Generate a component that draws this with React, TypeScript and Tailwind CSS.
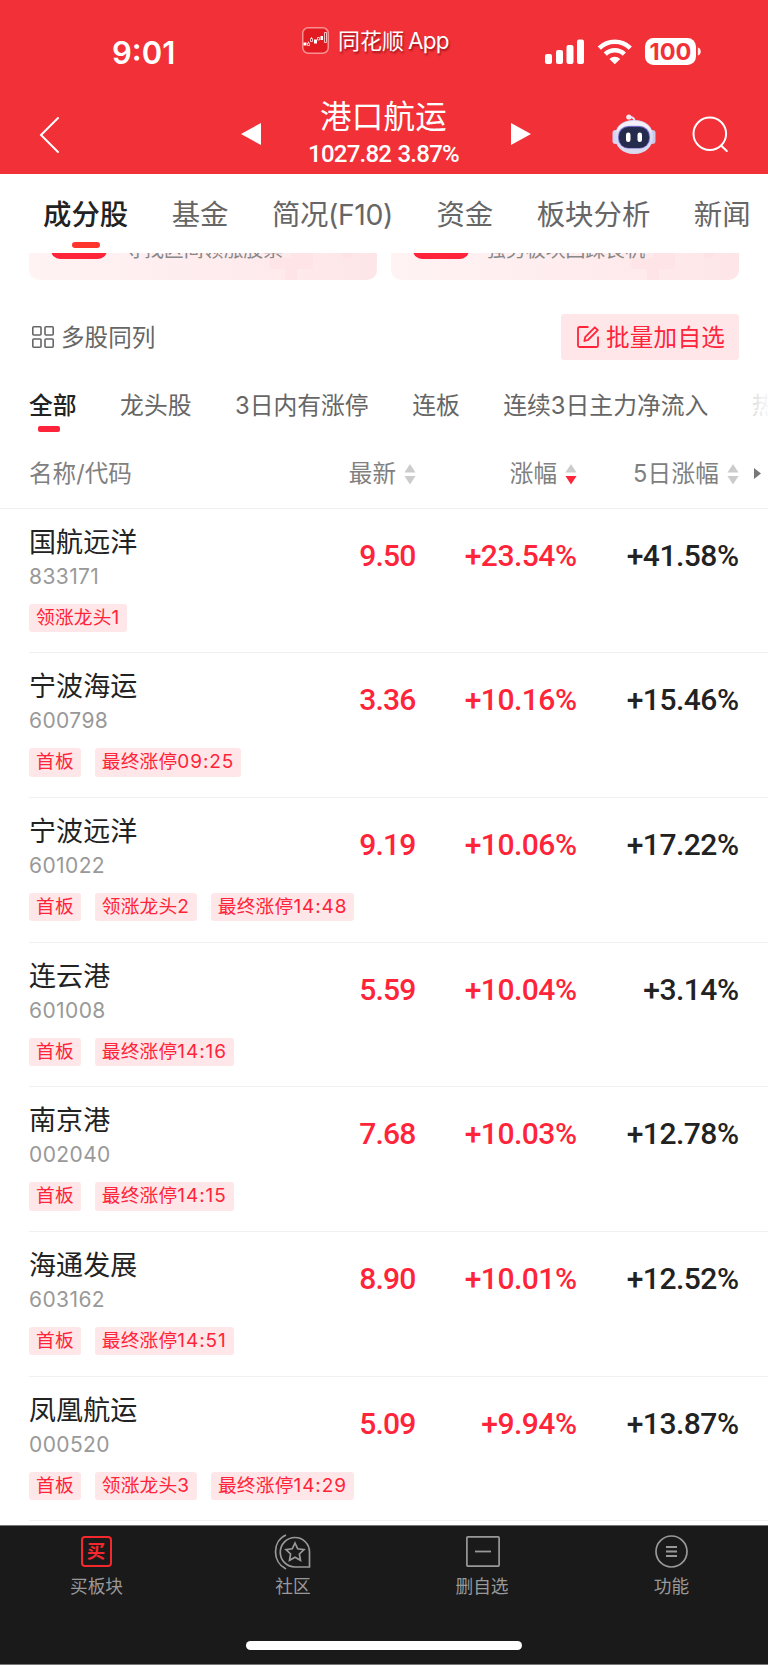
import React from 'react';
import clsx from 'clsx';

interface Stock {
  name: string;
  code: string;
  price: string;
  change: string;
  fiveDay: string;
  tags: string[];
}

const stocks: Stock[] = [
  { name: '国航远洋', code: '833171', price: '9.50', change: '+23.54%', fiveDay: '+41.58%', tags: ['领涨龙头1'] },
  { name: '宁波海运', code: '600798', price: '3.36', change: '+10.16%', fiveDay: '+15.46%', tags: ['首板', '最终涨停09:25'] },
  { name: '宁波远洋', code: '601022', price: '9.19', change: '+10.06%', fiveDay: '+17.22%', tags: ['首板', '领涨龙头2', '最终涨停14:48'] },
  { name: '连云港', code: '601008', price: '5.59', change: '+10.04%', fiveDay: '+3.14%', tags: ['首板', '最终涨停14:16'] },
  { name: '南京港', code: '002040', price: '7.68', change: '+10.03%', fiveDay: '+12.78%', tags: ['首板', '最终涨停14:15'] },
  { name: '海通发展', code: '603162', price: '8.90', change: '+10.01%', fiveDay: '+12.52%', tags: ['首板', '最终涨停14:51'] },
  { name: '凤凰航运', code: '000520', price: '5.09', change: '+9.94%', fiveDay: '+13.87%', tags: ['首板', '领涨龙头3', '最终涨停14:29'] },
];

const tabs = ['成分股', '基金', '简况(F10)', '资金', '板块分析', '新闻'];
const filters = ['全部', '龙头股', '3日内有涨停', '连板', '连续3日主力净流入', '热'];
const promos = ['寻找区间领涨股票', '强势板块回踩良机'];

function StatusBar() {
  return (
    <div className="flex h-[82px] items-start">
      <div className="w-[190px] pl-[112px] pt-[34px] text-[31px] font-semibold leading-[37px]">9:01</div>
      <div className="ml-[112px] mt-[26px] flex items-center">
        <svg width="27" height="27" viewBox="0 0 27 27" fill="none">
          <rect x="0.75" y="0.75" width="25.5" height="25.5" rx="5.5" fill="#e21b22" stroke="#f88f92" strokeWidth="1.5" />
          <path d="M1.5 15.500h3v3h-3zM12 12.500h3v4h-3zM18.500 9h2.500v4h-2.500z" fill="#fff" />
          <path d="M5.500 16h2v2.500h-2zM6.500 14.500V16M8.500 11.500h2V14.500h-2zM9.500 10v1.500M15.500 10.500h2v2.500h-2zM22.500 5.500h2v10h-2z" stroke="#fff" strokeWidth="0.7" />
        </svg>
        <span className="ml-[9px] whitespace-nowrap pt-px text-[22px] leading-[27px] [text-shadow:1px_2px_2px_rgba(90,0,0,0.55)]">
          同花顺<span className="ml-[4px] text-[22.500px] tracking-[-0.8px]">App</span>
        </span>
      </div>
      <svg className="absolute left-[545px] top-[38px]" width="157" height="28" viewBox="0 0 157 28" fill="#fff">
        <rect x="0" y="16" width="7" height="10" rx="2" />
        <rect x="11" y="12" width="7" height="14" rx="2" />
        <rect x="21.500" y="7" width="7" height="19" rx="2" />
        <rect x="32" y="1.500" width="7" height="24.500" rx="2" />
        <g fill="none" stroke="#fff" strokeWidth="4.600">
          <path d="M54.300 10.200a22 22 0 0 1 31 0" />
          <path d="M60.300 16.100a13.500 13.500 0 0 1 19 0" />
        </g>
        <path d="M69.800 26.200l-5.400-5.300a7.700 7.700 0 0 1 10.800 0z" />
        <rect x="100" y="0" width="51" height="27" rx="8.500" />
        <path d="M152.800 9.500c4 .8 4 7.200 0 8z" opacity="0.9" />
        <text x="125.500" y="22" textAnchor="middle" fontFamily="Inter, sans-serif" fontWeight="700" fontSize="23.500" fill="#f23038">100</text>
      </svg>
    </div>
  );
}

function Robot() {
  return (
    <svg width="44" height="41" viewBox="0 0 44 41" fill="none">
      <path d="M22.500 7c0-3-2-4-5.500-4" stroke="#e4e3f5" strokeWidth="2" />
      <circle cx="16.800" cy="3" r="2.600" fill="#f3e9f2" />
      <rect x="0.500" y="16" width="6" height="14" rx="3" fill="#d5d4f0" />
      <rect x="37.500" y="16" width="6" height="14" rx="3" fill="#c9c8ea" />
      <path d="M22 6C9.500 6 3 13 3 22.500S9.500 40 22 40s19-8 19-17.500S34.500 6 22 6z" fill="#d9d9f0" />
      <path d="M22 7C11 7 5.500 12.500 4.500 19c4-6 10-8 17.500-8s13.500 2 17.500 8C38.500 12.500 33 7 22 7z" fill="#f4f1fa" />
      <rect x="6" y="12" width="32" height="22.500" rx="10.500" fill="#7367c9" />
      <rect x="7" y="13" width="30" height="21" rx="9.500" fill="#252b4c" />
      <rect x="14" y="18.500" width="4.500" height="9.500" rx="2.200" fill="#fff" />
      <rect x="25.500" y="18.500" width="4.500" height="9.500" rx="2.200" fill="#fff" />
    </svg>
  );
}

function TitleBar() {
  return (
    <div className="flex h-[92px] items-start">
      <svg className="ml-[39px] mt-[34px]" width="21" height="38" viewBox="0 0 21 38" fill="none" stroke="#fff" strokeWidth="2" strokeLinecap="round">
        <path d="M19 2L2 19l17 17" />
      </svg>
      <svg className="ml-[181px] mt-[41px]" width="20" height="22" viewBox="0 0 20 22" fill="#fff">
        <path d="M20 0v22L0 11z" />
      </svg>
      <div className="flex w-[250px] flex-col items-center whitespace-nowrap pr-[5px] pt-[15px]">
        <h1 className="text-[31.500px] leading-[40px] tracking-[0.2px]">港口航运</h1>
        <div className="pt-[2px] font-[Roboto] text-[24px] font-medium leading-[30px] tracking-[-0.75px] [word-spacing:1px]">1027.82 3.87%</div>
      </div>
      <svg className="mt-[41px]" width="20" height="22" viewBox="0 0 20 22" fill="#fff">
        <path d="M0 0l20 11L0 22z" />
      </svg>
      <div className="ml-[81px] mt-[32px]">
        <Robot />
      </div>
      <svg className="ml-[36px] mt-[34px]" width="37" height="38" viewBox="0 0 37 38" fill="none" stroke="#fff" strokeWidth="2" strokeLinecap="round">
        <circle cx="17.800" cy="17.800" r="16.300" />
        <path d="M29.300 29.800l5.500 5.200" />
      </svg>
    </div>
  );
}

function PromoCard({ text }: { text: string }) {
  return (
    <div className="relative h-[80px] w-[348px] shrink-0 overflow-hidden rounded-[10px] bg-linear-to-r from-[#fff3f4] to-[#fee6e8]">
      <svg className="absolute bottom-0 right-0" width="120" height="27" viewBox="0 0 120 27" fill="#fddfe2" opacity="0.5">
        <path d="M34 0h22v16H40v11H28V16H12V5h22zM84 0h12c0 7-12 8-12 0z" />
      </svg>
      <div className="flex h-[58.500px] items-end">
        <div className="ml-[22px] h-[40px] w-[56px] rounded-[9px] bg-[#ff2439]" />
        <div className="-mb-[5px] ml-[17px] whitespace-nowrap text-[19.900px] leading-[28px] text-[#888]">{text}</div>
      </div>
    </div>
  );
}

function SortArrows({ active }: { active?: boolean }) {
  return (
    <svg className="ml-[8px] mr-px" width="12" height="21" viewBox="0 0 13 21" preserveAspectRatio="none">
      <path d="M6.500 0l6 8.500h-12z" fill="#ccc" />
      <path d="M6.500 20.500l6-8.500h-12z" fill={active ? '#ff2439' : '#ccc'} />
    </svg>
  );
}

function Tag({ text }: { text: string }) {
  // digits are spaced a little wider than the characters before them
  const [, label, digits] = text.match(/^(\D+)(.*)$/) ?? ['', text, ''];

  return (
    <span className="h-[28.500px] whitespace-nowrap rounded-[3px] bg-[#ffe7e9] px-[7px] text-[18.700px] leading-[28px] tracking-[0.2px] text-[#ff2439]">
      {label}
      {digits && <span className="text-[19px] tracking-[0.9px]">{digits}</span>}
    </span>
  );
}

function StockRow({ stock }: { stock: Stock }) {
  return (
    <div className="ml-[29px] h-[144.700px] border-b-[1.500px] border-[#f0f0f0] pr-[29.500px] pt-[15px]">
      <div className="grid h-[80px] grid-cols-[1fr_161px_162px] font-[Roboto] text-[30px] font-medium leading-[38px] tracking-[-0.5px] text-[#ff2439]">
        <div className="flex justify-between">
          <div className="font-['Inter','Noto_Sans_CJK_SC',sans-serif] font-normal">
            <div className="text-[27px] leading-[38px] tracking-[0.1px] text-[#222]">{stock.name}</div>
            <div className="text-[21px] leading-[29px] tracking-[0.4px] text-[#999]">{stock.code}</div>
          </div>
          <div className="pt-[13px] tracking-[-0.8px]">{stock.price}</div>
        </div>
        <div className="pt-[13px] text-right">{stock.change}</div>
        <div className="pt-[13px] text-right text-[#222]">{stock.fiveDay}</div>
      </div>
      <div className="flex gap-[14px]">
        {stock.tags.map((tag) => (
          <Tag key={tag} text={tag} />
        ))}
      </div>
    </div>
  );
}

function BottomItem({ label, children }: { label: string; children: React.ReactNode }) {
  return (
    <div className="flex flex-col items-center">
      <div className="flex h-[36px] items-center">{children}</div>
      <div className="mt-[4px] text-[17.700px] leading-[26px]">{label}</div>
    </div>
  );
}

export default function App() {
  return (
    <div className="flex h-[1665px] w-[768px] flex-col overflow-hidden bg-white font-['Inter','Noto_Sans_CJK_SC',sans-serif] text-[#666]">
      <header className="relative h-[174px] shrink-0 bg-[#f23038] text-white">
        <StatusBar />
        <TitleBar />
      </header>

      <nav className="flex h-[79px] shrink-0 gap-[43.500px] pl-[43px] pt-[21px]">
        {tabs.map((tab, index) => (
          <div
            key={tab}
            className={clsx(
              'flex shrink-0 flex-col items-center whitespace-nowrap text-[28.400px] leading-[40px]',
              index === 0 && 'font-medium text-[#222]',
              index === 2 && 'tracking-[-0.4px]'
            )}
          >
            {tab}
            {index === 0 && <div className="ml-px mt-[7px] h-[5.500px] w-[28px] rounded-full bg-[#ff352c]" />}
          </div>
        ))}
      </nav>

      <div className="flex h-[27px] shrink-0 items-end gap-[14px] overflow-hidden pl-[29px]">
        {promos.map((text) => (
          <PromoCard key={text} text={text} />
        ))}
      </div>

      <div className="mt-[34px] flex h-[46px] shrink-0 items-center justify-between pl-[32px] pr-[29px] text-[23.600px]">
        <div className="flex items-center">
          <svg width="22" height="22" viewBox="0 0 22 22" fill="none" stroke="#666" strokeWidth="1.600">
            <rect x="0.800" y="0.800" width="8.200" height="8.200" rx="1" />
            <rect x="13" y="0.800" width="8.200" height="8.200" rx="1" />
            <rect x="0.800" y="13" width="8.200" height="8.200" rx="1" />
            <rect x="13" y="13" width="8.200" height="8.200" rx="1" />
          </svg>
          <span className="ml-[7px] pt-[2px]">多股同列</span>
        </div>
        <button className="flex h-[46px] w-[178px] items-center rounded-[3px] bg-[#ffe7e9] pl-[16px] text-[#ff2439]">
          <svg width="22" height="22" viewBox="0 0 22 22" fill="none" stroke="#ff2439" strokeWidth="1.800" strokeLinejoin="round">
            <path d="M11.500 1H2.500A1.500 1.500 0 0 0 1 2.500v17A1.500 1.500 0 0 0 2.500 21h17a1.500 1.500 0 0 0 1.500-1.500V10.500" />
            <path d="M17.800 1.300l3 2.800L11 14l-3.600 1 .8-3.900z" />
          </svg>
          <span className="ml-[7px] whitespace-nowrap pt-[2px] tracking-[0.2px]">批量加自选</span>
        </button>
      </div>

      <div className="relative mt-[29px] flex h-[48px] shrink-0 gap-[43.500px] overflow-hidden pl-[29px]">
        {filters.map((filter, index) => (
          <div
            key={filter}
            className={clsx('shrink-0 whitespace-nowrap text-[23.800px] leading-[34px]', index === 0 && 'font-medium text-[#222]')}
          >
            {filter}
            {index === 0 && <div className="ml-[9px] mt-[3px] h-[5.500px] w-[22px] rounded-[2px] bg-[#ff2439]" />}
          </div>
        ))}
        <div className="absolute right-0 top-0 h-full w-[50px] bg-linear-to-r from-white/40 to-white/95" />
      </div>

      <div className="flex h-[71.500px] shrink-0 items-start border-b-[1.500px] border-[#f0f0f0] pl-[29px] pt-[20px] text-[23.600px] leading-[34px] text-[#808080]">
        <div className="flex-1">名称/代码</div>
        <div className="flex items-center">
          最新
          <SortArrows />
        </div>
        <div className="flex w-[161px] items-center justify-end">
          涨幅
          <SortArrows active />
        </div>
        <div className="flex w-[162px] items-center justify-end">
          <span className="tracking-[0.2px]">5日涨幅</span>
          <SortArrows />
        </div>
        <svg className="ml-[14px] mr-[7px] mt-[11px]" width="7" height="11" viewBox="0 0 7 11" fill="#777">
          <path d="M0 0l7 5.500L0 11z" />
        </svg>
      </div>

      <main className="h-[1016px] shrink-0 overflow-hidden">
        {stocks.map((stock) => (
          <StockRow key={stock.code} stock={stock} />
        ))}
      </main>

      <footer className="relative h-[140.500px] shrink-0 overflow-hidden border-y border-[#777] bg-[#1a1a1a] pt-[8px] text-[#999]">
        <div className="grid grid-cols-[193px_200px_178px_201px]">
          <BottomItem label="买板块">
            <span className="mr-px flex size-[31px] items-center justify-center rounded-[4px] border-2 border-[#f4282d] text-[18.500px] font-bold leading-none text-[#f4282d]">买</span>
          </BottomItem>
          <BottomItem label="社区">
            <svg className="mr-[2px]" width="37" height="36" viewBox="0 0 37 36" fill="none" stroke="#999" strokeWidth="1.700">
              <path d="M21 3.500a14.700 14.700 0 1 0 0 29.500h14.500V18A14.500 14.500 0 0 0 21 3.500z" />
              <path d="M12 1C-2 7-2 28 12 35" />
              <path d="M21 9l2.700 5.800 6.300.8-4.600 4.400 1.100 6.300L21 23.300l-5.500 3 1.100-6.300-4.600-4.400 6.300-.8z" />
            </svg>
          </BottomItem>
          <BottomItem label="删自选">
            <svg className="ml-[2px]" width="34" height="31" viewBox="0 0 34 31" fill="none" stroke="#999" strokeWidth="1.700">
              <rect x="0.900" y="0.900" width="32.200" height="29.200" rx="1" />
              <path d="M9 15.500h16" strokeWidth="1.800" />
            </svg>
          </BottomItem>
          <BottomItem label="功能">
            <svg width="33" height="33" viewBox="0 0 33 33" fill="none" stroke="#999" strokeWidth="1.700">
              <circle cx="16.500" cy="16.500" r="15.500" />
              <path d="M11 12h11M11 16.500h11M11 21h11" strokeWidth="1.800" />
            </svg>
          </BottomItem>
        </div>
        <div className="ml-[246px] mt-[41px] h-[9.500px] w-[276px] rounded-full bg-white" />
      </footer>
    </div>
  );
}
